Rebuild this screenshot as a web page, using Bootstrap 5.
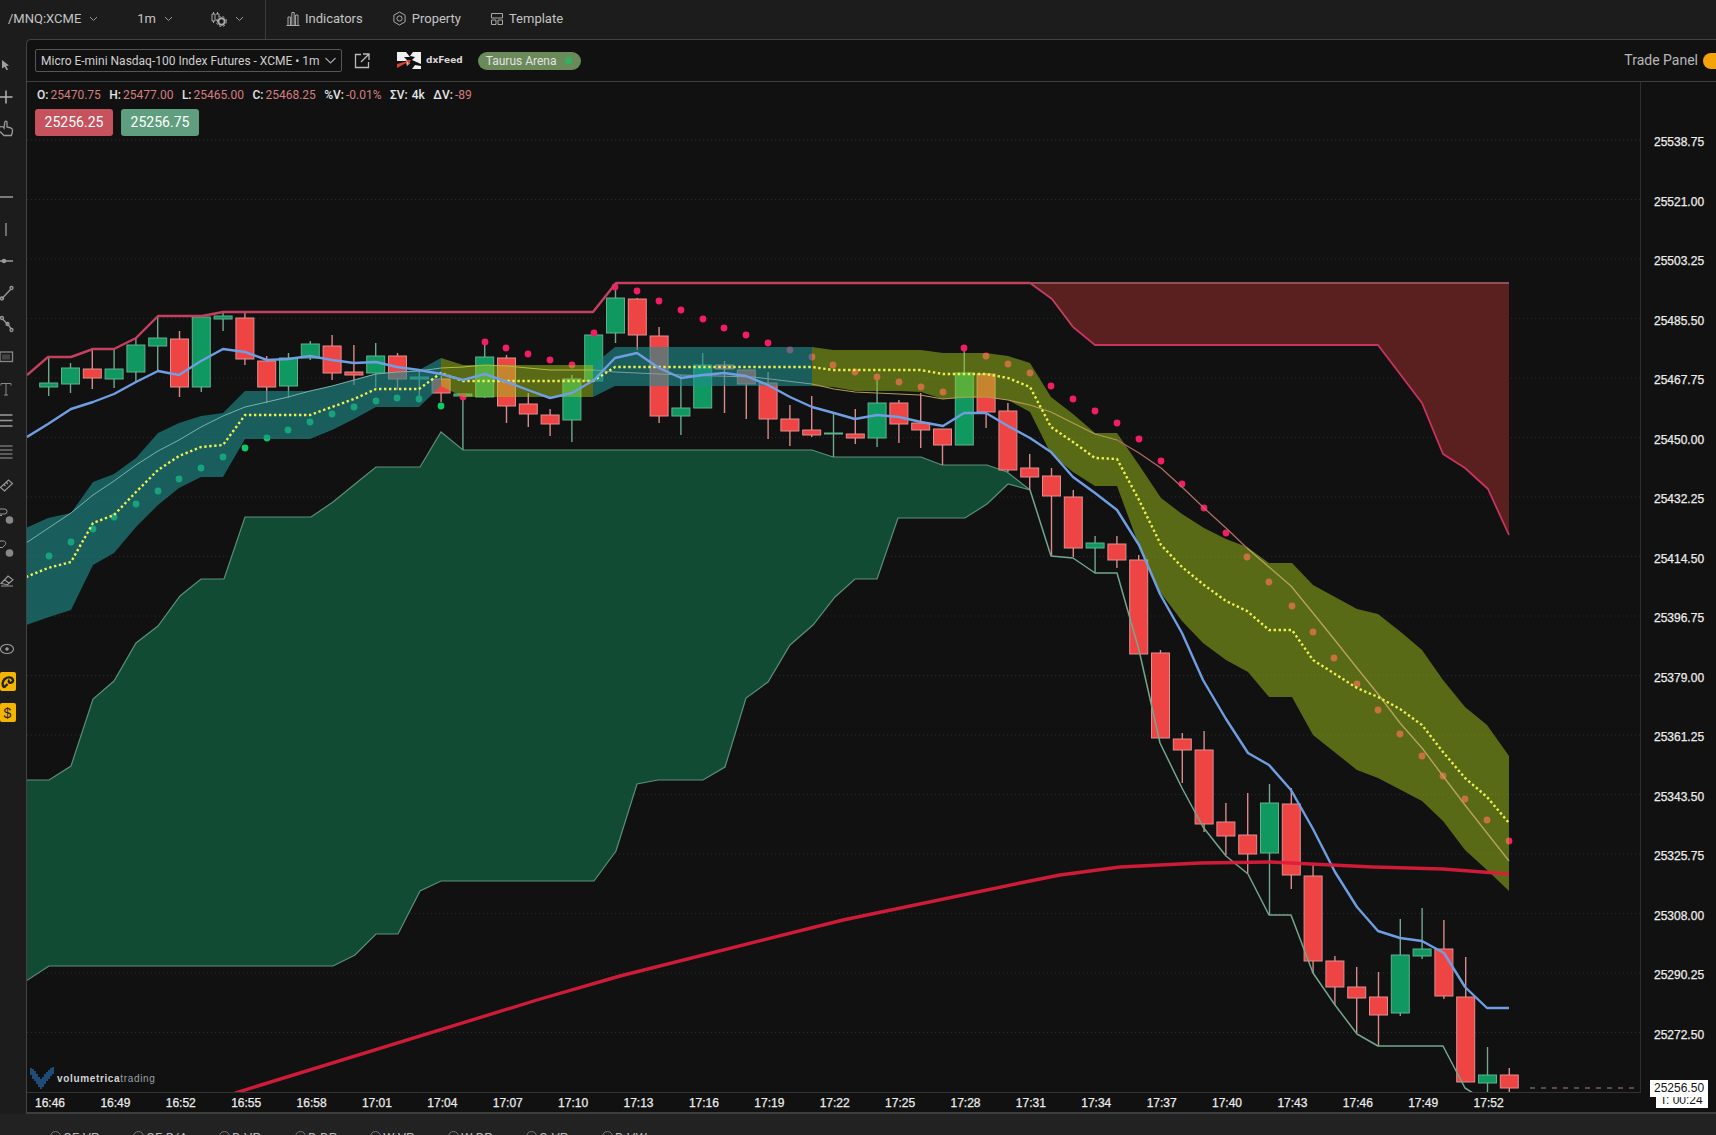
<!DOCTYPE html>
<html lang="en">
<head>
<meta charset="utf-8">
<title>Chart</title>
<link rel="stylesheet" href="https://cdn.jsdelivr.net/npm/bootstrap@5.3.0/dist/css/bootstrap.min.css">
<style>
html,body{height:100%;overflow:hidden;background:#1c1c1c;font-family:Roboto,"Liberation Sans",sans-serif;}
.shell{width:1716px;height:1135px;overflow:hidden;}
.top-strip{height:39px;background:#1c1c1c;color:#c4c4c4;font-size:13px;flex:none;}
.top-strip svg{flex:none;}
.tb-sym{padding-left:8px;padding-bottom:2px;width:266px;height:39px;border-right:1px solid #3c3c3c;}
.tb-rest{padding-bottom:2px;height:39px;}
.tb-item{color:#c4c4c4;}
.mid-row{height:1075px;flex:none;}
.tool-rail{width:26px;flex:none;background:#1c1c1c;}
.tool-rail svg{display:block;}
.chart-panel{width:1690px;flex:none;background:#111;border-top:1px solid #444;border-left:1px solid #444;border-top-left-radius:5px;border-bottom:2px solid #3e3e3e;}
.panel-head{height:42px;border-bottom:1px solid #3e3e3e;padding-left:8px;flex:none;}
.sym-select{width:307px;height:23px;border:1px solid #555;border-radius:2px;color:#cfcfcf;font-size:12px;padding:0 5px;}
.dx-name{font-family:"DejaVu Sans",sans-serif;font-weight:700;font-size:9px;color:#d8d8d8;margin-left:5px;margin-right:15px;padding-top:1px;}
.arena-pill{height:18px;width:103px;border-radius:9px;background:#6b8a5a;color:#e2e2e2;font-size:12px;padding:0 9px 0 8px;}
.arena-dot{width:7px;height:7px;border-radius:50%;background:#2fb45e;}
.trade-lbl{color:#b8b8b8;font-size:14px;margin-right:5px;}
.trade-sw{width:30px;height:16px;border-radius:8px;background:#f5a30a;margin-right:-17px;}
.body-row{height:1030px;}
.plot-col{width:1614px;flex:none;}
.plot{height:1011px;position:relative;border-bottom:1px solid #333;border-right:1px solid #2e2e2e;overflow:hidden;}
.plot svg{display:block;position:absolute;left:0;top:0;}
.stats{position:absolute;left:10px;top:4px;font-size:12px;color:#e4e4e4;gap:8.5px;font-weight:500;white-space:nowrap;}
.stats b{color:#d47e80;font-weight:400;margin-left:2px;}
.quotes{position:absolute;left:8px;top:27px;gap:8px;}
.q-chip{width:78px;height:27px;border-radius:3px;color:#fff;font-size:14px;}
.q-sell{background:#c5525c;}
.q-buy{background:#5f9f7f;}
.brand-mark{position:absolute;left:3px;top:985px;gap:2px;}
.brand-txt{font-family:"Liberation Sans",sans-serif;font-size:10px;letter-spacing:.65px;color:#9aa0a4;}
.brand-txt b{color:#d0d4d8;}
.time-row{height:19px;font-family:"Liberation Sans",sans-serif;font-size:12px;color:#ececec;-webkit-text-stroke:.25px #ececec;margin-left:-9.7px;white-space:nowrap;}
.time-cell{width:65.4px;flex:none;text-align:center;}
.price-col{width:75px;flex:none;position:relative;padding-top:30.5px;font-family:"Liberation Sans",sans-serif;font-size:12px;color:#ececec;-webkit-text-stroke:.25px #ececec;overflow:hidden;}
.price-cell{height:59.5px;padding-left:13px;}
.tag-live,.tag-clock{position:absolute;background:#fff;color:#111;-webkit-text-stroke:0;font-family:"Liberation Sans",sans-serif;font-size:12px;}
.tag-live{left:9px;top:998px;width:58px;height:17px;padding-left:4px;line-height:17px;}
.tag-clock{left:15px;top:1010px;width:52px;height:16px;padding-left:4px;line-height:16px;}
.foot-strip{height:21px;background:#222;flex:none;padding-left:26px;overflow:hidden;}
.radio-lab{font-size:13px;color:#b8b8b8;white-space:nowrap;padding-top:16px;line-height:16px;}
.radio-dot{width:11px;height:11px;border:1px solid #777;border-radius:50%;margin-right:2px;margin-top:1px;flex:none;}
.radio-a{width:83px}.radio-b{width:86px}.radio-c{width:76px}.radio-d{width:75px}.radio-e{width:78px}.radio-f{width:76px}
</style>
</head>
<body>
<div class="shell d-flex flex-column">
  <div class="top-strip d-flex align-items-center">
    <div class="tb-sym d-flex align-items-center">
      <span>/MNQ:XCME</span>
      <svg class="ms-2" width="9" height="6" viewBox="0 0 9 6"><path d="M1 1l3.500 3.500L8 1" fill="none" stroke="#999"/></svg>
      <span style="margin-left:39px">1m</span>
      <svg class="ms-2" width="9" height="6" viewBox="0 0 9 6"><path d="M1 1l3.500 3.500L8 1" fill="none" stroke="#999"/></svg>
      <svg style="margin-left:38px" width="16" height="16" viewBox="0 0 16 16"><path d="M2.500 1v2M2.500 10v2M1 3h3v7H1zM6.500 1v2M6.500 9v2M5 3h3v3" fill="none" stroke="#aaa"/><circle cx="10.500" cy="10.500" r="3.200" fill="none" stroke="#aaa" stroke-width="2"/><circle cx="10.500" cy="10.500" r="5" fill="none" stroke="#aaa" stroke-width="1" stroke-dasharray="2 2"/></svg>
      <svg class="ms-2" width="9" height="6" viewBox="0 0 9 6"><path d="M1 1l3.500 3.500L8 1" fill="none" stroke="#999"/></svg>
    </div>
    <div class="tb-rest d-flex align-items-center">
    <svg style="margin-left:20px" width="14" height="15" viewBox="0 0 14 15"><path d="M.5 14.500h13M2 14V6h2.400v8M5.800 14V1.500h2.400V14M9.600 14V4H12v10" fill="none" stroke="#aaa"/></svg>
    <span class="tb-item" style="margin-left:5px">Indicators</span>
    <svg style="margin-left:29px" width="15" height="15" viewBox="0 0 15 15"><path d="M7.500 1l5.600 3.200v6.600L7.500 14l-5.600-3.200V4.200z" fill="none" stroke="#aaa"/><circle cx="7.500" cy="7.500" r="2.600" fill="none" stroke="#aaa"/></svg>
    <span class="tb-item" style="margin-left:5px">Property</span>
    <svg style="margin-left:29px" width="14" height="14" viewBox="0 0 14 14"><path d="M1.500 1.500h11v4.500h-11zM1.500 8h4.500v4.500H1.500zM8 8h4.500v4.500H8z" fill="none" stroke="#aaa"/></svg>
    <span class="tb-item" style="margin-left:5px">Template</span>
    </div>
  </div>
  <div class="mid-row d-flex">
    <div class="tool-rail">
      <svg width="26" height="1096" viewBox="0 39 26 1096" fill="none" stroke="#9a9a9a" stroke-width="1.300">
        <path d="M2 60l7 5.500-2.800.5 1.800 3.500-1.500.8-1.800-3.500L2 68.500z" fill="#a0a0a0" stroke="none"/>
        <path d="M0 97h12.500M6 90.500v13" stroke="#b4b4b4" stroke-width="1.500"/>
        <path d="M0 127c2-1 3.500 0 4 1l.8-6c.2-1.300 2.200-1.300 2.200.2v4.800l4 1c2 .6 2 2 1 5.500l-.6 2H4l-4-4"/>
        <path d="M0 197h13M6 223v13M0 261h13" />
        <circle cx="4" cy="261" r="1.600" fill="#9a9a9a"/>
        <path d="M2 298.500l8.500-9"/><circle cx="2" cy="298.500" r="1.500"/><circle cx="11.500" cy="288" r="1.500"/>
        <path d="M2.500 319l5 5 3.500 4.500"/><circle cx="2" cy="318" r="1.500"/><circle cx="7.500" cy="324" r="1.500"/><circle cx="11.500" cy="330" r="1.500"/>
        <rect x="0" y="352" width="12.500" height="9.500" stroke="#888" stroke-width="1.300"/><rect x="2" y="354.500" width="8" height="5" fill="#444" stroke="none"/>
        <path d="M1 383.500h10M1 383.500v2M11 383.500v2M6 383.500v11.500M4 395h4" stroke="#888" stroke-width="1"/>
        <path d="M0 415h12.500M0 420.500h12.500M0 426h12.500" stroke-width="1.500"/>
        <path d="M0 446h12.500M0 450h12.500M0 454h12.500M0 458h12.500" stroke-width="1.200"/>
        <path d="M.5 487.500l8-7.500 4 3.500-8 7.500zM4 484.500l1.500 1.500M6.500 482.500l1.500 1.500" stroke-width="1.100"/>
        <path d="M0 509h4.500a2.500 2.500 0 0 1 0 5H0M0 515.500h2" stroke-width="1"/><circle cx="9.500" cy="520" r="3.800" fill="#888" stroke="none"/>
        <path d="M0 541h3.500a2.500 2.500 0 0 1 2 3.500l-3 3H0" stroke-width="1"/><circle cx="9.500" cy="553" r="3.800" fill="#888" stroke="none"/>
        <path d="M1 583.500l7-7.500 5 3.700-5.500 5zM4.500 579.800l5 3.700M1 586h12" stroke-width="1.100"/>
        <ellipse cx="7" cy="649" rx="6.500" ry="4.500" stroke-width="1.100"/><circle cx="7" cy="649" r="1.800" fill="#9a9a9a" stroke="none"/>
        <rect x="0" y="672" width="16" height="19" rx="2" fill="#f5b400" stroke="none"/>
        <path d="M4 687.500c-2-2-2-6 .8-8.500 3-2.400 7-2 8 .5 1 2.500-2 4-3.500 3-1-.8-.5-2 .3-2.400M4 687.500l3.500-3.500" stroke="#222" stroke-width="2.400"/>
        <rect x="0" y="703" width="16" height="19" rx="2" fill="#f5b400" stroke="none"/>
        <text x="3.500" y="717.500" font-family="Liberation Sans,sans-serif" font-size="14" fill="#222" stroke="none">$</text>
        <rect x="0" y="1131" width="16" height="12" rx="2" fill="#f5b400" stroke="none"/><rect x="3" y="1133" width="9" height="8" fill="#333" stroke="none"/>
      </svg>
    </div>
    <div class="chart-panel d-flex flex-column">
      <div class="panel-head d-flex align-items-center">
        <div class="sym-select d-flex align-items-center justify-content-between">
          <span>Micro E-mini Nasdaq-100 Index Futures - XCME • 1m</span>
          <svg width="11" height="7" viewBox="0 0 11 7"><path d="M.5 1l5 5 5-5" fill="none" stroke="#aaa" stroke-width="1.100"/></svg>
        </div>
        <svg style="margin-left:12px" width="16" height="16" viewBox="0 0 16 16"><path d="M7 1.500H1.500v13h13V9M9 1h6v6M15 1L7 9" fill="none" stroke="#bbb" stroke-width="1.300"/></svg>
        <svg style="margin-left:27px" width="24" height="17" viewBox="0 0 24 17"><rect width="24" height="17" fill="#111"/><path d="M0 0h9l4 5H7l6 6-3 3-1-5-9 0zM24 0h-8l-3 4 5 1-3 3 9 4v-7zM24 17h-9l3-4 6 1z" fill="#f0f0f0"/><path d="M0 16l11-6-1 4 4-6H8l3 1-11 3z" fill="#d8432a"/></svg>
        <span class="dx-name">dxFeed</span>
        <div class="arena-pill d-flex align-items-center justify-content-between"><span>Taurus Arena</span><i class="arena-dot"></i></div>
        <span class="trade-lbl ms-auto">Trade Panel</span>
        <i class="trade-sw"></i>
      </div>
      <div class="body-row d-flex">
        <div class="plot-col d-flex flex-column">
          <div class="plot">
            <svg id="chartsvg" width="1613" height="1011" viewBox="27 82 1613 1011"></svg>
            <div class="stats d-flex">
              <span>O:<b>25470.75</b></span><span>H:<b>25477.00</b></span><span>L:<b>25465.00</b></span><span>C:<b>25468.25</b></span><span>%V:<b>-0.01%</b></span><span>ΣV:<span class="ms-1">4k</span></span><span>ΔV:<b>-89</b></span>
            </div>
            <div class="quotes d-flex">
              <div class="q-chip q-sell d-flex align-items-center justify-content-center">25256.25</div>
              <div class="q-chip q-buy d-flex align-items-center justify-content-center">25256.75</div>
            </div>
            <div class="brand-mark d-flex align-items-center">
              <svg style="position:static" width="25" height="23" viewBox="0 0 25 23"><path d="M1 1v7M3 2v10M5 4v10M7 7v10M9 10v10M11 12v10M13 10v10M15 7v10M17 5v9M19 3v9M21 1v8M23 0v7" stroke="#2c86e0" stroke-width="1" fill="none"/></svg>
              <span class="brand-txt"><b>volumetrica</b>trading</span>
            </div>
          </div>
          <div class="time-row d-flex align-items-center">
            <span class="time-cell">16:46</span><span class="time-cell">16:49</span><span class="time-cell">16:52</span><span class="time-cell">16:55</span><span class="time-cell">16:58</span><span class="time-cell">17:01</span><span class="time-cell">17:04</span><span class="time-cell">17:07</span><span class="time-cell">17:10</span><span class="time-cell">17:13</span><span class="time-cell">17:16</span><span class="time-cell">17:19</span><span class="time-cell">17:22</span><span class="time-cell">17:25</span><span class="time-cell">17:28</span><span class="time-cell">17:31</span><span class="time-cell">17:34</span><span class="time-cell">17:37</span><span class="time-cell">17:40</span><span class="time-cell">17:43</span><span class="time-cell">17:46</span><span class="time-cell">17:49</span><span class="time-cell">17:52</span>
          </div>
        </div>
        <div class="price-col">
          <div class="price-cell d-flex align-items-center">25538.75</div>
          <div class="price-cell d-flex align-items-center">25521.00</div>
          <div class="price-cell d-flex align-items-center">25503.25</div>
          <div class="price-cell d-flex align-items-center">25485.50</div>
          <div class="price-cell d-flex align-items-center">25467.75</div>
          <div class="price-cell d-flex align-items-center">25450.00</div>
          <div class="price-cell d-flex align-items-center">25432.25</div>
          <div class="price-cell d-flex align-items-center">25414.50</div>
          <div class="price-cell d-flex align-items-center">25396.75</div>
          <div class="price-cell d-flex align-items-center">25379.00</div>
          <div class="price-cell d-flex align-items-center">25361.25</div>
          <div class="price-cell d-flex align-items-center">25343.50</div>
          <div class="price-cell d-flex align-items-center">25325.75</div>
          <div class="price-cell d-flex align-items-center">25308.00</div>
          <div class="price-cell d-flex align-items-center">25290.25</div>
          <div class="price-cell d-flex align-items-center">25272.50</div>
          <div class="tag-clock">T: 00:24</div>
          <div class="tag-live">25256.50</div>
        </div>
      </div>
    </div>
  </div>
  <div class="foot-strip d-flex">
    <div class="radio-lab radio-a d-flex"><i class="radio-dot ms-4"></i>OF-VP</div>
    <div class="radio-lab radio-b d-flex"><i class="radio-dot ms-4"></i>OF-B/A</div>
    <div class="radio-lab radio-c d-flex"><i class="radio-dot ms-4"></i>D-VP</div>
    <div class="radio-lab radio-d d-flex"><i class="radio-dot ms-4"></i>D-DP</div>
    <div class="radio-lab radio-e d-flex"><i class="radio-dot ms-4"></i>W-VP</div>
    <div class="radio-lab radio-e d-flex"><i class="radio-dot ms-4"></i>W-DP</div>
    <div class="radio-lab radio-f d-flex"><i class="radio-dot ms-4"></i>Q-VP</div>
    <div class="radio-lab radio-f d-flex"><i class="radio-dot ms-4"></i>D-VW</div>
  </div>
</div>
<script>
(function(){
var S=document.getElementById('chartsvg'),h='';
function pl(p,st,w,ex){h+='<polyline fill="none" stroke="'+st+'" stroke-width="'+w+'" stroke-linejoin="round" points="'+p+'" '+(ex||'')+'/>';}
function pg(p,f,ex){h+='<polygon fill="'+f+'" points="'+p+'" '+(ex||'')+'/>';}
for(var k=0;k<16;k++){var y=140+59.5*k;h+='<line x1="27" x2="1640" y1="'+y+'" y2="'+y+'" stroke="#2a2a2a" stroke-dasharray="1 3"/>';}
pg('26,780 49,780 71,766 93,699 114,681 136,643 158,626 180,596 201,579 224,579 245,517 311,517 333,502 355,484 376,467 420,467 441,432 463,450 812,450 833,457 921,457 942,465 987,465 1007,472 1030,490 1008,484 987,504 965,518 898,518 877,579 855,579 835,597 813,625 790,645 768,682 746,698 725,767 703,780 658,780 637,784 616,851 594,881 441,881 420,891 398,934 376,934 355,955 333,966 49,966 26,981','#114b33','stroke="#5c8f78" stroke-width="1.2"');
pg('1030,283 1052,299 1073,327 1095,345 1378,345 1400,374 1422,403 1443,454 1465,468 1488,489 1509,535 1509,283','#5a2020');
pl('1073,327 1095,345 1378,345 1400,374 1422,403 1443,454 1465,468 1488,489 1509,535','#c9335e',1.8);
pl('1030,283 1509,283','#8f5056',1.8);
var C=[[357,383,387,396,'g'],[363,368,384,393,'g'],[348,369,378,389,'r'],[348,369,379,388,'g'],[338,345,372,382,'g'],[316,338,346,370,'g'],[331,339,387,397,'r'],[317,317,387,392,'g'],[312,316,319,331,'g'],[313,318,359,365,'r'],[356,361,387,403,'r'],[353,358,386,398,'g'],[341,344,358,360,'g'],[335,346,373,380,'r'],[345,372,375,385,'r'],[343,356,373,387,'g'],[353,356,379,390,'r'],[370,377,379,397,'g'],[376,379,393,402,'r'],[394,394,396,450,'g'],[345,357,397,398,'g'],[355,358,406,423,'r'],[393,404,414,427,'r'],[409,415,424,436,'r'],[375,379,420,442,'g'],[335,335,381,381,'g'],[287,298,333,343,'g'],[298,299,335,350,'r'],[327,336,416,423,'r'],[375,408,416,435,'g'],[353,365,408,408,'g'],[361,365,369,413,'r'],[370,370,384,419,'r'],[372,383,419,439,'r'],[405,419,431,446,'r'],[396,430,435,437,'r'],[413,433,434,457,'g'],[409,434,438,444,'r'],[377,403,438,447,'g'],[400,403,424,443,'r'],[393,423,430,448,'r'],[429,429,445,465,'r'],[349,373,445,445,'g'],[373,374,412,428,'r'],[403,411,470,472,'r'],[454,468,477,490,'r'],[468,476,496,556,'r'],[490,497,548,557,'r'],[536,543,548,573,'g'],[536,544,560,568,'r'],[555,560,654,654,'r'],[650,653,738,738,'r'],[733,739,750,783,'r'],[731,750,824,832,'r'],[803,822,836,855,'r'],[793,835,854,873,'r'],[784,803,853,915,'g'],[788,804,875,889,'r'],[865,876,961,973,'r'],[956,961,987,1005,'r'],[967,987,998,1033,'r'],[972,997,1015,1046,'r'],[919,955,1013,1016,'g'],[908,949,956,959,'g'],[920,949,996,999,'r'],[957,997,1082,1082,'r'],[1047,1075,1083,1093,'g'],[1068,1075,1088,1094,'r']];
C.forEach(function(c,i){var x=48.7+21.8*i,r=c[4]=='r';
 h+='<line x1="'+x+'" x2="'+x+'" y1="'+c[0]+'" y2="'+c[3]+'" stroke="'+(r?'#d98a8a':'#6fa88f')+'" stroke-width="1.4"/>';
 h+='<rect x="'+(x-9)+'" y="'+c[1]+'" width="18" height="'+(c[2]-c[1])+'" fill="'+(r?'#ef4444':'#0f9960')+'" stroke="'+(r?'#e08f8f':'#62b08f')+'" stroke-width="1"/>';});
var gd=[[49,556],[71,542],[93,529],[114,517],[136,504],[158,491],[179,479],[201,468],[223,457],[245,448],[267,438],[288,430],[310,422],[332,414],[354,407],[376,401],[397,398],[419,399],[441,406]];
gd.forEach(function(d){h+='<circle cx="'+d[0]+'" cy="'+d[1]+'" r="3.4" fill="#10c864"/>';});
var rd=[[463,397],[485,342],[506,348],[528,354],[550,360],[572,365],[594,333],[615,287],[637,291],[659,301],[681,310],[703,319],[724,328],[746,335],[768,343],[790,350],[812,357],[833,365],[855,372],[877,377],[899,382],[921,387],[943,392],[964,348],[986,356],[1008,364],[1030,373],[1051,386],[1073,399],[1095,411],[1117,423],[1139,439],[1161,461],[1182,484],[1204,508],[1226,533],[1247,557],[1269,582],[1292,606],[1313,632],[1334,658],[1357,684],[1378,710],[1400,734],[1422,756],[1443,776],[1465,799],[1487,820],[1509,841]];
rd.forEach(function(d){h+='<circle cx="'+d[0]+'" cy="'+d[1]+'" r="3.4" fill="#f01e62"/>';});
var T='rgba(30,140,140,.62)',O='rgba(159,195,25,.5)';
pg('26,528 48,518 71,513 93,482 114,474 136,458 158,433 179,423 201,416 223,413 245,391 310,391 332,386 354,380 376,373 419,370 441,358 441,386 419,407 376,407 354,419 332,430 310,439 245,439 223,477 201,477 179,488 158,505 136,527 114,553 93,565 71,610 49,617 26,625',T);
pg('441,358 463,365 593,365 593,397 463,397 441,386',O);
pg('593,365 615,347 812,347 812,386 615,386 593,397',T);
pg('812,347 833,350 900,350 921,350 943,353 986,353 1008,356 1030,363 1051,397 1073,414 1095,433 1117,433 1139,465 1161,498 1182,514 1204,528 1226,539 1247,547 1269,563 1292,563 1313,585 1357,609 1378,614 1402,633 1422,650 1443,680 1465,707 1487,725 1509,756 1509,891 1487,870 1465,850 1443,821 1422,801 1378,778 1357,770 1313,735 1292,697 1269,697 1248,672 1226,660 1203,643 1182,621 1160,592 1138,543 1117,486 1095,486 1073,472 1051,454 1030,412 1008,400 986,397 964,398 943,399 921,392 900,391 855,391 833,387 812,386',O);
pl('26,543 71,513 93,495 114,481 136,465 158,451 179,440 201,427 223,416 245,407 267,402 288,397 310,391 332,386 354,380 376,374 397,372 419,371 441,368','#79b3ab',1);
pl('441,368 463,367 485,365 507,366 528,368 550,370 594,370','#b4bc3c',1);
pl('594,370 615,372 681,375 753,377 812,384','#7f9f9a',1);
pl('812,384 834,389 855,392 920,395 943,399 964,397 986,397 1008,400 1030,405 1051,412 1073,423 1095,434 1117,440','#b59a55',1.2);
pl('1117,440 1139,453 1161,468 1182,487 1204,508 1226,528 1247,548','#ac6d64',1.3);
pl('1247,548 1269,567 1291,586 1313,613 1334,639 1357,668 1378,694 1400,723 1422,748 1443,776 1465,805 1487,833 1509,861','#b7a05c',1.4);
pl('1030,490 1051,556 1073,558 1095,573 1117,573 1139,650 1160,743 1182,788 1203,827 1226,856 1248,874 1269,915 1291,915 1313,973 1335,1005 1357,1034 1378,1046 1443,1046 1465,1088 1473,1093','#72a78f',1.5);
pl('26,577 48,568 71,562 93,523 114,515 136,492 158,470 179,456 201,447 223,445 245,415 310,415 332,407 354,399 376,389 419,389 441,373 463,381 506,381 593,381 615,367 812,367 833,370 920,370 943,374 986,374 1008,378 1030,387 1051,427 1073,442 1095,458 1117,459 1139,500 1161,545 1182,567 1204,585 1226,601 1247,611 1269,630 1292,630 1313,660 1335,674 1357,688 1378,697 1400,709 1422,725 1443,752 1465,778 1487,797 1509,823','#f0f050',2.4,'stroke-dasharray="2.4 2.6"');
pl('27,437 48,424 71,409 93,402 114,394 136,382 158,371 179,375 201,361 223,349 245,352 267,360 288,359 310,356 332,360 354,363 376,362 397,367 419,370 441,374 463,380 485,374 507,382 528,390 550,398 572,393 594,380 615,358 637,353 659,368 681,378 703,375 724,373 746,376 768,385 790,397 812,407 834,413 855,419 877,415 899,417 921,422 943,426 964,413 986,413 1008,426 1030,438 1051,452 1073,477 1095,493 1117,510 1139,545 1160,594 1182,633 1203,680 1226,719 1248,753 1269,765 1291,790 1313,829 1335,872 1357,907 1378,931 1400,938 1422,941 1444,953 1465,987 1487,1008 1509,1008','#6f9fe2',2.4);
pl('235,1093 537,1000 620,976 843,920 1020,883 1060,875 1120,867 1200,863 1270,862 1373,867 1443,869 1509,874','#dd1c3c',3.4,'stroke-opacity=".92"');
pl('27,375 48,357 71,357 93,349 114,349 136,338 158,316 202,316 223,312 593,312 616,283 1030,283','#c4405f',2.4);
pl('1030,283 1052,299 1073,327','#c4405f',1.8);
pl('1530,1088 1638,1088','#7a5a5f',1.5,'stroke-dasharray="5 6"');
S.innerHTML=h;
})();
</script>
</body>
</html>
